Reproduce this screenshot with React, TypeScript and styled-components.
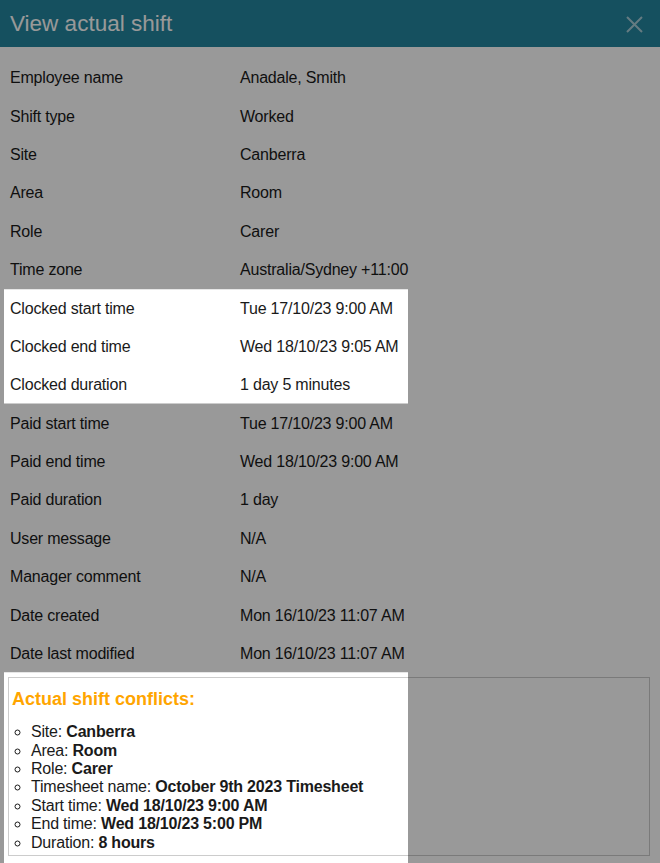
import React, { useLayoutEffect, useRef, useState } from "react";
import styled, { createGlobalStyle } from "styled-components";

const GlobalStyle = createGlobalStyle`
  html, body {
    margin: 0;
    padding: 0;
    background: #ffffff;
  }
  body {
    font-family: "Liberation Sans", Arial, sans-serif;
    color: #1a1a1a;
  }
`;

const Dialog = styled.div`
  width: 660px;
  min-height: 863px;
  background: #ffffff;
  display: flex;
  flex-direction: column;
`;

const Header = styled.header`
  height: 47px;
  background: #23859e;
  display: flex;
  align-items: center;
  justify-content: space-between;
  padding: 1px 17px 0 10px;
  box-sizing: border-box;
`;

const Title = styled.h2`
  margin: 0;
  font-size: 22.5px;
  font-weight: normal;
  color: #ffffff;
`;

const CloseButton = styled.button`
  border: none;
  background: transparent;
  padding: 0;
  width: 17px;
  height: 17px;
  display: flex;
  align-items: center;
  justify-content: center;
  cursor: pointer;
`;

const Body = styled.div`
  padding: 12px 10px 0 4px;
  display: flex;
  flex-direction: column;
`;

const Group = styled.div<{ $spot?: boolean }>`
  display: flex;
  flex-direction: column;
  width: ${(p) => (p.$spot ? "404px" : "auto")};
`;

const Row = styled.div`
  height: 38.4px;
  display: grid;
  grid-template-columns: 230px 1fr;
  align-items: center;
  padding: 0 6px;
  font-size: 16px;
  letter-spacing: -0.2px;
`;

const Label = styled.span`
  color: #1a1a1a;
`;

const Value = styled.span`
  color: #1a1a1a;
`;

const ConflictFrame = styled.section`
  margin: 4px 0 7px 4px;
  border: 1px solid #cccccc;
  padding: 0 3px 3px 3px;
`;

const ConflictTitle = styled.h4`
  margin: 11px 0 13px 0;
  font-size: 18px;
  line-height: 21px;
  font-weight: bold;
  color: #ffa500;
`;

const ConflictList = styled.ul`
  margin: 0;
  padding-left: 19px;
  list-style: circle;
  font-size: 16px;
  line-height: 18.4px;
  color: #1a1a1a;
  letter-spacing: -0.2px;
`;

const ConflictItem = styled.li`
  b {
    font-weight: bold;
  }
`;

const OverlaySvg = styled.svg`
  position: fixed;
  inset: 0;
  width: 100%;
  height: 100%;
  pointer-events: none;
  z-index: 10;
`;

type Rect = { x: number; y: number; w: number; h: number };

function Overlay({ holes }: { holes: Rect[] }) {
  const outer = "M0 0 H10000 V10000 H0 Z";
  const inner = holes
    .map((r) => `M${r.x} ${r.y} H${r.x + r.w} V${r.y + r.h} H${r.x} Z`)
    .join(" ");
  return (
    <OverlaySvg>
      <path d={`${outer} ${inner}`} fill="rgba(0,0,0,0.4)" fillRule="evenodd" />
    </OverlaySvg>
  );
}

const details: [string, string][] = [
  ["Employee name", "Anadale, Smith"],
  ["Shift type", "Worked"],
  ["Site", "Canberra"],
  ["Area", "Room"],
  ["Role", "Carer"],
  ["Time zone", "Australia/Sydney +11:00"],
];

const clocked: [string, string][] = [
  ["Clocked start time", "Tue 17/10/23 9:00 AM"],
  ["Clocked end time", "Wed 18/10/23 9:05 AM"],
  ["Clocked duration", "1 day 5 minutes"],
];

const rest: [string, string][] = [
  ["Paid start time", "Tue 17/10/23 9:00 AM"],
  ["Paid end time", "Wed 18/10/23 9:00 AM"],
  ["Paid duration", "1 day"],
  ["User message", "N/A"],
  ["Manager comment", "N/A"],
  ["Date created", "Mon 16/10/23 11:07 AM"],
  ["Date last modified", "Mon 16/10/23 11:07 AM"],
];

const conflicts: [string, string][] = [
  ["Site", "Canberra"],
  ["Area", "Room"],
  ["Role", "Carer"],
  ["Timesheet name", "October 9th 2023 Timesheet"],
  ["Start time", "Wed 18/10/23 9:00 AM"],
  ["End time", "Wed 18/10/23 5:00 PM"],
  ["Duration", "8 hours"],
];

const SPOT_WIDTH = 404;

function Rows({ items }: { items: [string, string][] }) {
  return (
    <>
      {items.map(([l, v]) => (
        <Row key={l}>
          <Label>{l}</Label>
          <Value>{v}</Value>
        </Row>
      ))}
    </>
  );
}

export default function App() {
  const clockedRef = useRef<HTMLDivElement>(null);
  const conflictRef = useRef<HTMLElement>(null);
  const [holes, setHoles] = useState<Rect[]>([]);

  useLayoutEffect(() => {
    const a = clockedRef.current?.getBoundingClientRect();
    const b = conflictRef.current?.getBoundingClientRect();
    const next: Rect[] = [];
    if (a) next.push({ x: a.left, y: a.top, w: SPOT_WIDTH, h: a.height - 1 });
    if (b) next.push({ x: b.left - 4, y: b.top - 5, w: SPOT_WIDTH, h: b.height + 12 });
    setHoles(next);
  }, []);

  return (
    <>
      <GlobalStyle />
      <Dialog>
        <Header>
          <Title>View actual shift</Title>
          <CloseButton aria-label="Close">
            <svg width="17" height="17" viewBox="0 0 17 17">
              <path d="M1 1 L16 16 M16 1 L1 16" stroke="rgba(255,255,255,0.6)" strokeWidth="2" />
            </svg>
          </CloseButton>
        </Header>
        <Body>
          <Group>
            <Rows items={details} />
          </Group>
          <Group $spot ref={clockedRef}>
            <Rows items={clocked} />
          </Group>
          <Group>
            <Rows items={rest} />
          </Group>
          <ConflictFrame ref={conflictRef}>
            <ConflictTitle>Actual shift conflicts:</ConflictTitle>
            <ConflictList>
              {conflicts.map(([l, v]) => (
                <ConflictItem key={l}>
                  {l}: <b>{v}</b>
                </ConflictItem>
              ))}
            </ConflictList>
          </ConflictFrame>
        </Body>
      </Dialog>
      <Overlay holes={holes} />
    </>
  );
}
